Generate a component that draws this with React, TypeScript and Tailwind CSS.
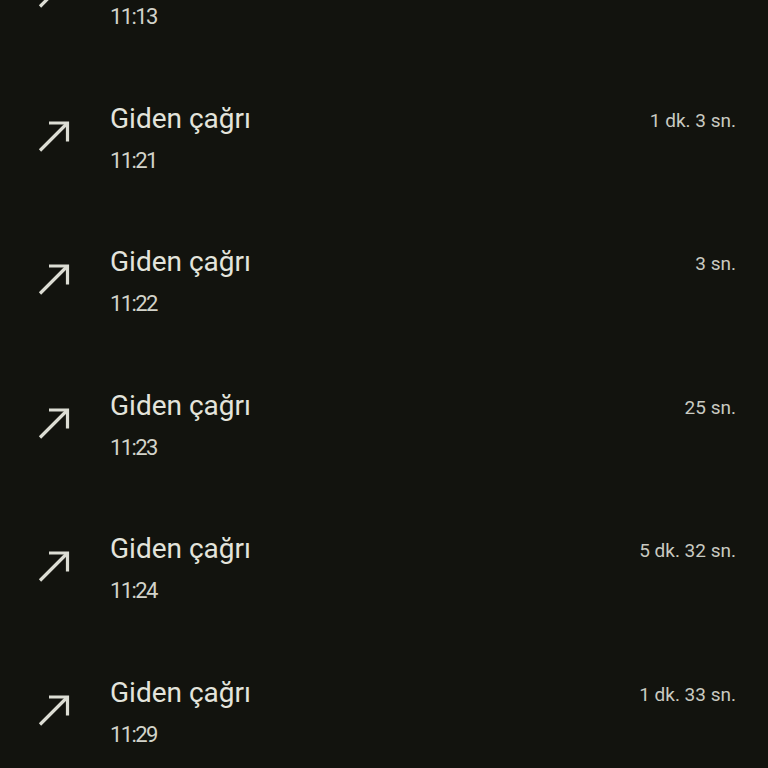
import React from "react";

const calls = [
  { time: "11:13", duration: "" },
  { time: "11:21", duration: "1 dk. 3 sn." },
  { time: "11:22", duration: "3 sn." },
  { time: "11:23", duration: "25 sn." },
  { time: "11:24", duration: "5 dk. 32 sn." },
  { time: "11:29", duration: "1 dk. 33 sn." },
];

function OutgoingIcon() {
  return (
    <svg
      width="36"
      height="36"
      viewBox="0 0 36 36"
      fill="none"
      stroke="#dcddd4"
      strokeWidth="3.2"
      className="-mt-[7px] shrink-0"
    >
      <path d="M4 32.5 L31 5.5" />
      <path d="M13 5 H31.5 V23.5" />
    </svg>
  );
}

function CallRow({ time, duration }: { time: string; duration: string }) {
  return (
    <div className="flex h-[143.5px] items-center pl-[36px] pr-[32px]">
      <OutgoingIcon />
      <div className="ml-[38px] flex flex-1 flex-col">
        <div className="flex items-start justify-between">
          <span className="text-[28px] leading-[32px] text-[#e3e4dc]">Giden çağrı</span>
          {duration && (
            <span className="mt-[6px] text-[19px] leading-[24px] text-[#c9cac1]">{duration}</span>
          )}
        </div>
        <span className="mt-[11px] text-[22px] leading-[30px] tracking-[-1.6px] text-[#d2d3ca]">
          {time}
        </span>
      </div>
    </div>
  );
}

export default function App() {
  return (
    <div
      className="h-[768px] w-[768px] overflow-hidden bg-[#12130e]"
      style={{ fontFamily: "Roboto, 'Noto Sans', sans-serif" }}
    >
      <div className="-mt-[76px]">
        {calls.map((c) => (
          <CallRow key={c.time} time={c.time} duration={c.duration} />
        ))}
      </div>
    </div>
  );
}
